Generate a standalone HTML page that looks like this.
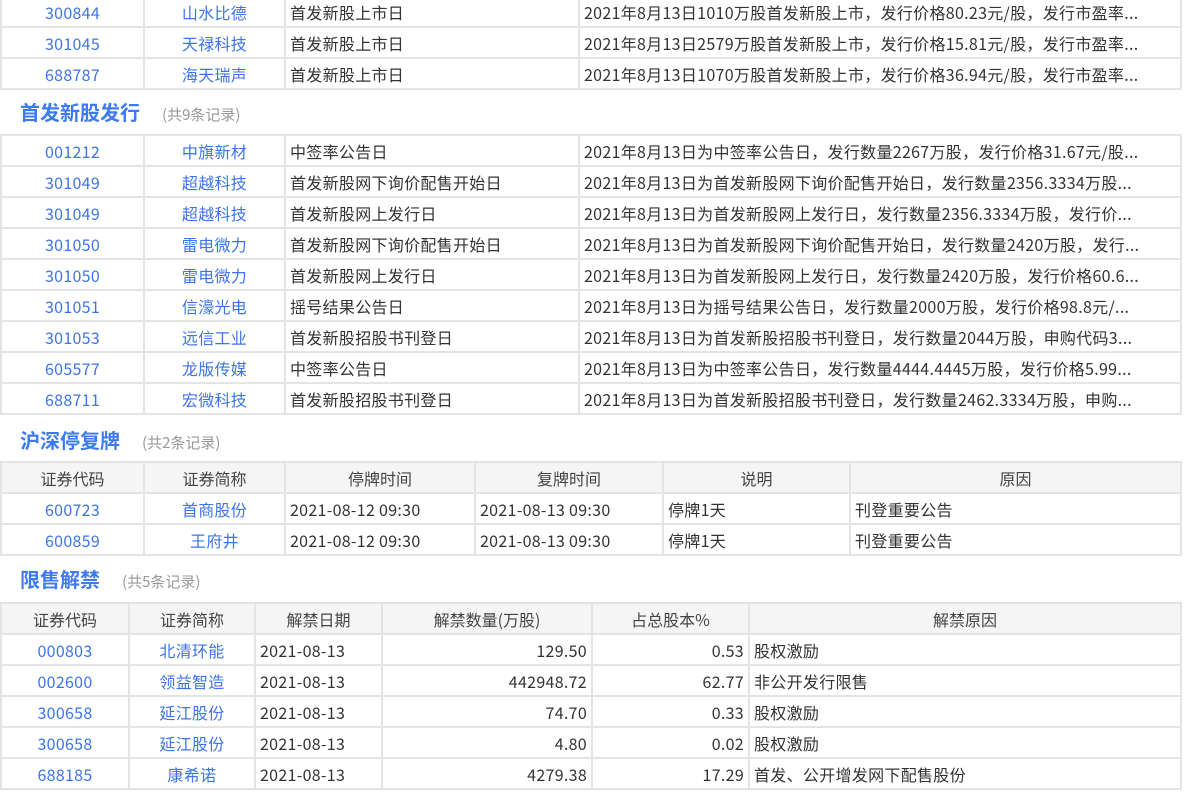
<!DOCTYPE html>
<html><head><meta charset="utf-8"><style>
body{margin:0;width:1187px;height:793px;overflow:hidden;background:#fff;font-family:"Noto Sans CJK SC","Liberation Sans",sans-serif;font-size:16px;color:#333;position:relative}
table{position:absolute;left:0;border-collapse:collapse;table-layout:fixed;width:1182px}
tr{height:31px}
td,th{border:2px solid #e4e4e4;padding:0 4px;line-height:20px;vertical-align:middle;white-space:nowrap;overflow:hidden;text-overflow:ellipsis;font-weight:normal}
td{letter-spacing:0.3px}
th{background:#f5f5f5;color:#444;text-align:center}
.c{text-align:center}.r{text-align:right}
a{color:#3d74e8;text-decoration:none}
.h{position:absolute;left:20px;font-size:20px;line-height:24px;font-weight:bold;color:#3d7af0}
.h span{font-size:15px;font-weight:normal;color:#999;margin-left:22px}
</style></head><body>
<table style="top:-5px"><colgroup><col style="width:143px"><col style="width:141px"><col style="width:294px"><col></colgroup>
<tr><td class="c"><a>300844</a></td><td class="c"><a>山水比德</a></td><td>首发新股上市日</td><td>2021年8月13日1010万股首发新股上市，发行价格80.23元/股，发行市盈率...</td></tr>
<tr><td class="c"><a>301045</a></td><td class="c"><a>天禄科技</a></td><td>首发新股上市日</td><td>2021年8月13日2579万股首发新股上市，发行价格15.81元/股，发行市盈率...</td></tr>
<tr><td class="c"><a>688787</a></td><td class="c"><a>海天瑞声</a></td><td>首发新股上市日</td><td>2021年8月13日1070万股首发新股上市，发行价格36.94元/股，发行市盈率...</td></tr>
</table>
<div class="h" style="top:100px">首发新股发行<span>(共9条记录)</span></div>
<table style="top:134px"><colgroup><col style="width:143px"><col style="width:141px"><col style="width:294px"><col></colgroup>
<tr><td class="c"><a>001212</a></td><td class="c"><a>中旗新材</a></td><td>中签率公告日</td><td>2021年8月13日为中签率公告日，发行数量2267万股，发行价格31.67元/股...</td></tr>
<tr><td class="c"><a>301049</a></td><td class="c"><a>超越科技</a></td><td>首发新股网下询价配售开始日</td><td>2021年8月13日为首发新股网下询价配售开始日，发行数量2356.3334万股...</td></tr>
<tr><td class="c"><a>301049</a></td><td class="c"><a>超越科技</a></td><td>首发新股网上发行日</td><td>2021年8月13日为首发新股网上发行日，发行数量2356.3334万股，发行价...</td></tr>
<tr><td class="c"><a>301050</a></td><td class="c"><a>雷电微力</a></td><td>首发新股网下询价配售开始日</td><td>2021年8月13日为首发新股网下询价配售开始日，发行数量2420万股，发行...</td></tr>
<tr><td class="c"><a>301050</a></td><td class="c"><a>雷电微力</a></td><td>首发新股网上发行日</td><td>2021年8月13日为首发新股网上发行日，发行数量2420万股，发行价格60.6...</td></tr>
<tr><td class="c"><a>301051</a></td><td class="c"><a>信濠光电</a></td><td>摇号结果公告日</td><td>2021年8月13日为摇号结果公告日，发行数量2000万股，发行价格98.8元/...</td></tr>
<tr><td class="c"><a>301053</a></td><td class="c"><a>远信工业</a></td><td>首发新股招股书刊登日</td><td>2021年8月13日为首发新股招股书刊登日，发行数量2044万股，申购代码3...</td></tr>
<tr><td class="c"><a>605577</a></td><td class="c"><a>龙版传媒</a></td><td>中签率公告日</td><td>2021年8月13日为中签率公告日，发行数量4444.4445万股，发行价格5.99...</td></tr>
<tr><td class="c"><a>688711</a></td><td class="c"><a>宏微科技</a></td><td>首发新股招股书刊登日</td><td>2021年8月13日为首发新股招股书刊登日，发行数量2462.3334万股，申购...</td></tr>
</table>
<div class="h" style="top:428px">沪深停复牌<span>(共2条记录)</span></div>
<table style="top:461px"><colgroup><col style="width:143px"><col style="width:141px"><col style="width:190px"><col style="width:188px"><col style="width:187px"><col></colgroup>
<tr><th>证券代码</th><th>证券简称</th><th>停牌时间</th><th>复牌时间</th><th>说明</th><th>原因</th></tr>
<tr><td class="c"><a>600723</a></td><td class="c"><a>首商股份</a></td><td>2021-08-12 09:30</td><td>2021-08-13 09:30</td><td>停牌1天</td><td>刊登重要公告</td></tr>
<tr><td class="c"><a>600859</a></td><td class="c"><a>王府井</a></td><td>2021-08-12 09:30</td><td>2021-08-13 09:30</td><td>停牌1天</td><td>刊登重要公告</td></tr>
</table>
<div class="h" style="top:567px">限售解禁<span>(共5条记录)</span></div>
<table style="top:602px"><colgroup><col style="width:128px"><col style="width:126px"><col style="width:127px"><col style="width:210px"><col style="width:157px"><col></colgroup>
<tr><th>证券代码</th><th>证券简称</th><th>解禁日期</th><th>解禁数量(万股)</th><th>占总股本%</th><th>解禁原因</th></tr>
<tr><td class="c"><a>000803</a></td><td class="c"><a>北清环能</a></td><td>2021-08-13</td><td class="r">129.50</td><td class="r">0.53</td><td>股权激励</td></tr>
<tr><td class="c"><a>002600</a></td><td class="c"><a>领益智造</a></td><td>2021-08-13</td><td class="r">442948.72</td><td class="r">62.77</td><td>非公开发行限售</td></tr>
<tr><td class="c"><a>300658</a></td><td class="c"><a>延江股份</a></td><td>2021-08-13</td><td class="r">74.70</td><td class="r">0.33</td><td>股权激励</td></tr>
<tr><td class="c"><a>300658</a></td><td class="c"><a>延江股份</a></td><td>2021-08-13</td><td class="r">4.80</td><td class="r">0.02</td><td>股权激励</td></tr>
<tr><td class="c"><a>688185</a></td><td class="c"><a>康希诺</a></td><td>2021-08-13</td><td class="r">4279.38</td><td class="r">17.29</td><td>首发、公开增发网下配售股份</td></tr>
</table>
</body></html>
